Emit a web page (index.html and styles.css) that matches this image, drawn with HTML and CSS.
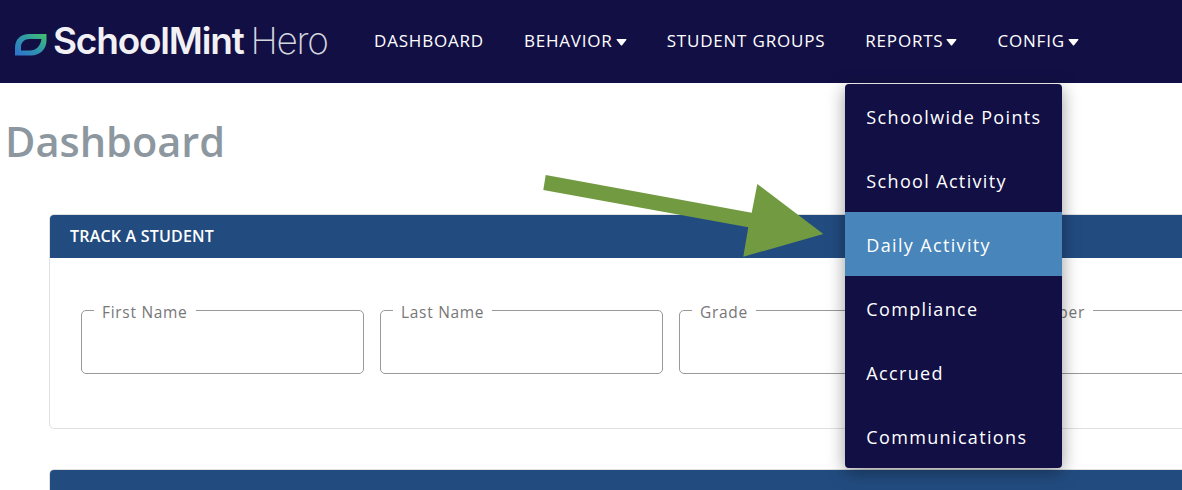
FILE: index.html
```html
<!DOCTYPE html>
<html>
    <head>
        <title>Dashboard</title>
        <meta charset="utf-8">
        <link rel="stylesheet" href="styles.css">
    </head>
    <body>
        <header class="topbar">
            <a class="logo" href="#">
                <svg class="logo-leaf" width="32" height="23" viewBox="0 0 32 23">
                    <defs>
                        <linearGradient id="leaf" x1="0" y1="1" x2="1" y2="0">
                            <stop offset="0" stop-color="#2f6fd0"/>
                            <stop offset="0.55" stop-color="#2f9aa8"/>
                            <stop offset="1" stop-color="#45c06a"/>
                        </linearGradient>
                    </defs>
                    <path fill="url(#leaf)" fill-rule="evenodd" d="M0 22.5V15C0 6 6 1 14 1H31.500V7.500C31.500 16 25 22.500 16 22.500ZM6 17.500H15C21 17.500 25.500 13 26.500 6H14.500C9.500 6 6 9.500 6 14Z"/>
                </svg>
                <span class="logo-bold">SchoolMint</span>
                <span class="logo-light">Hero</span>
            </a>
            <ul class="nav">
                <li><a href="#">DASHBOARD</a></li>
                <li><a href="#">BEHAVIOR<svg class="caret" width="11" height="7" viewBox="0 0 11 7"><path d="M1.200 0H9.800Q11 0 10.300 1L6.300 6Q5.500 7 4.700 6L.700 1Q0 0 1.200 0Z"/></svg></a></li>
                <li><a href="#">STUDENT GROUPS</a></li>
                <li class="open">
                    <a href="#">REPORTS<svg class="caret" width="11" height="7" viewBox="0 0 11 7"><path d="M1.200 0H9.800Q11 0 10.300 1L6.300 6Q5.500 7 4.700 6L.700 1Q0 0 1.200 0Z"/></svg></a>
                    <ul class="menu">
                        <li><a href="#">Schoolwide Points</a></li>
                        <li><a href="#">School Activity</a></li>
                        <li class="current"><a href="#">Daily Activity</a></li>
                        <li><a href="#">Compliance</a></li>
                        <li><a href="#">Accrued</a></li>
                        <li><a href="#">Communications</a></li>
                    </ul>
                </li>
                <li><a href="#">CONFIG<svg class="caret" width="11" height="7" viewBox="0 0 11 7"><path d="M1.200 0H9.800Q11 0 10.300 1L6.300 6Q5.500 7 4.700 6L.700 1Q0 0 1.200 0Z"/></svg></a></li>
            </ul>
        </header>
        <main class="page">
            <h1>Dashboard</h1>
            <section class="card">
                <h2 class="card-head">TRACK A STUDENT</h2>
                <form class="card-body">
                    <fieldset class="field"><legend>First Name</legend></fieldset>
                    <fieldset class="field"><legend>Last Name</legend></fieldset>
                    <fieldset class="field"><legend>Grade</legend></fieldset>
                    <fieldset class="field"><legend>ID Number</legend></fieldset>
                </form>
            </section>
            <section class="card">
                <div class="card-head"></div>
            </section>
        </main>
        <!-- annotation arrow drawn over the page -->
        <svg class="arrow" width="300" height="90" viewBox="0 0 300 90">
            <polygon points="2.700,0 0.300,15 205.300,52.300 200.300,81.700 280.300,59 214.300,9 208.700,37.700"/>
        </svg>
    </body>
</html>
```

FILE: styles.css
```css
* {
    margin: 0;
    padding: 0;
    box-sizing: border-box;
}
html, body {
    height: 490px;
    overflow: hidden;
}
body {
    position: relative;
    background-color: #fff;
    font-family: "Open Sans", "Liberation Sans", sans-serif;
}
li {
    list-style: none;
}
a {
    color: inherit;
    text-decoration: none;
}
.topbar {
    height: 83px;
    background-color: #120f45;
    display: flex;
    color: #fff;
}
.logo {
    width: 374px;
    padding: 22px 0 0 15px;
    display: flex;
    align-items: flex-start;
    font-family: Inter, "Liberation Sans", sans-serif;
    color: #f1f1f5;
}
.logo-leaf {
    margin: 11px 6px 0 0;
}
.logo-bold {
    font-size: 37px;
    font-weight: 600;
    letter-spacing: -1.2px;
    line-height: 38px;
}
.logo-light {
    font-size: 37px;
    font-weight: 200;
    letter-spacing: -1.300px;
    line-height: 38px;
    margin-left: 7px;
    color: #d5d5de;
}
.nav {
    display: flex;
    gap: 40px;
}
.nav > li {
    position: relative;
    font-size: 17px;
    font-weight: 500;
    letter-spacing: 0.8px;
    line-height: 82px;
}
.caret {
    fill: #fff;
    margin-left: 3px;
    vertical-align: 1px;
}
.menu {
    position: absolute;
    top: 84px;
    left: -20px;
    width: 217px;
    padding: 0;
    background-color: #120f45;
    border-radius: 4px;
    box-shadow: 0 4px 18px rgba(0, 0, 0, 0.4);
    overflow: hidden;
    z-index: 5;
}
.menu li {
    height: 64px;
    padding-left: 21px;
    font-size: 18px;
    letter-spacing: 1.350px;
    font-weight: 500;
    line-height: 66px;
}
.menu .current {
    background-color: #4785ba;
}
.page {
    width: 1400px;
}
h1 {
    padding: 31px 0 0 5px;
    height: 131px;
    font-size: 41.500px;
    line-height: 54px;
    font-weight: 600;
    color: #8d979f;
}
.card {
    margin-left: 49px;
    margin-bottom: 40px;
    border: 1px solid #e0e0e0;
    border-radius: 5px;
    overflow: hidden;
}
.card-head {
    height: 43px;
    padding-left: 20px;
    background-color: #224c80;
    color: #fff;
    font-size: 16px;
    font-weight: 600;
    letter-spacing: 0.2px;
    line-height: 43px;
}
.card-body {
    height: 170px;
    padding: 41px 0 0 31px;
    display: flex;
    gap: 16px;
}
.field {
    width: 283px;
    height: 75px;
    border: 1px solid #999;
    border-radius: 5px;
    padding: 0 12px;
}
.field legend {
    padding: 4px 8px 0;
    font-size: 15.500px;
    letter-spacing: 0.7px;
    line-height: 18px;
    color: #777;
}
.arrow {
    position: absolute;
    top: 175px;
    left: 543px;
    fill: #729b41;
}
```
